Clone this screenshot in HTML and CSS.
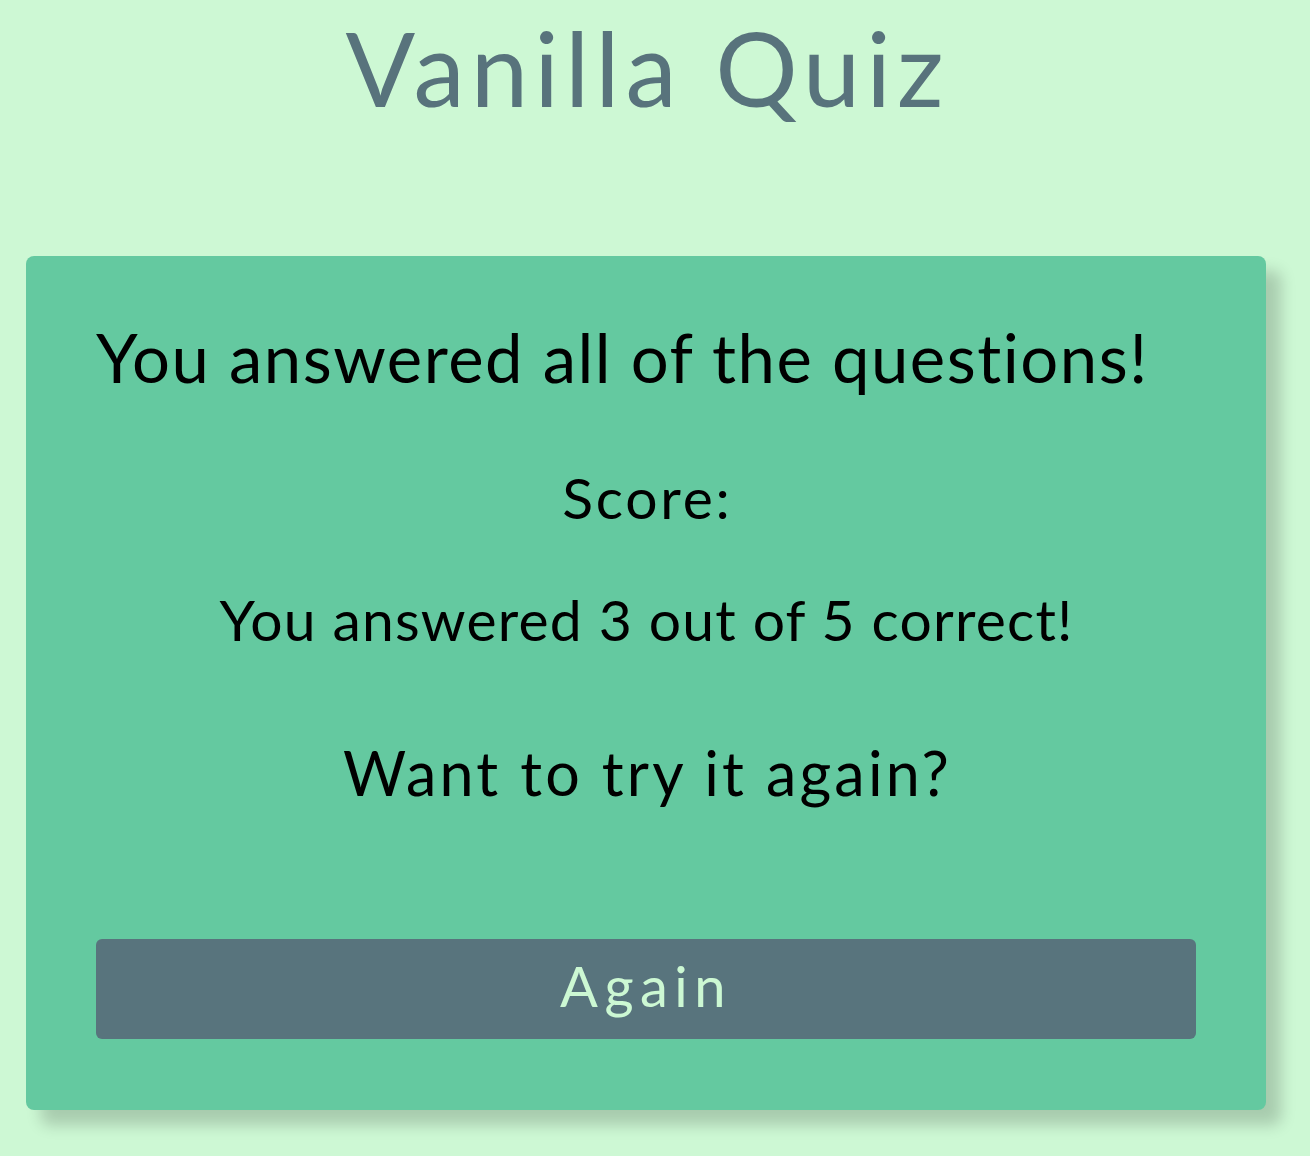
FILE: index.html
```html
<!DOCTYPE html>
<html lang="en">
<head>
<meta charset="utf-8">
<title>Vanilla Quiz</title>
<link rel="stylesheet" href="styles.css">
</head>
<body>
  <h1 class="title">Vanilla Quiz</h1>
  <main class="card">
    <h2 class="done">You answered all of the questions!</h2>
    <p class="score-label">Score:</p>
    <p class="score-text">You answered 3 out of 5 correct!</p>
    <h3 class="again-prompt">Want to try it again?</h3>
    <button class="again-btn" type="button">Again</button>
  </main>
</body>
</html>
```

FILE: styles.css
```css
html, body {
  margin: 0;
  padding: 0;
}

body {
  background: #cdf8d4;
  font-family: Lato, "Noto Sans", sans-serif;
  font-variant-ligatures: none;
  color: #000;
  height: 1156px;
  overflow: hidden;
}

.title {
  margin: 6px 0 0;
  font-size: 103px;
  line-height: 1.2;
  font-weight: 400;
  color: #58737c;
  text-align: center;
  letter-spacing: 6px;
  text-indent: -15px;
}

.card {
  margin: 126px 0 0 26px;
  width: 1240px;
  box-sizing: border-box;
  padding: 61px 70px 71px;
  background: #64c9a0;
  border-radius: 8px;
  box-shadow: 15px 15px 15px rgba(0, 0, 0, 0.18);
}

.done,
.score-label,
.score-text,
.again-prompt {
  margin: 0;
  font-weight: 400;
  line-height: 1.2;
  text-align: center;
}

.done {
  font-size: 67px;
  text-align: left;
  letter-spacing: 1.5px;
}

.score-label {
  margin-top: 66px;
  font-size: 57px;
  letter-spacing: 2.8px;
  text-indent: 2.8px;
}

.score-text {
  margin-top: 54px;
  font-size: 57px;
  letter-spacing: 1.2px;
  text-indent: 1.2px;
}

.again-prompt {
  margin-top: 82px;
  font-size: 61px;
  letter-spacing: 3.2px;
  text-indent: 3.2px;
}

.again-btn {
  display: block;
  margin-top: 130px;
  width: 100%;
  height: 100px;
  padding: 0 0 7px;
  border: none;
  border-radius: 6px;
  background: #58747d;
  color: #ccf8d3;
  font-family: inherit;
  font-size: 56px;
  line-height: 1.2;
  letter-spacing: 6.5px;
  cursor: pointer;
}
```
